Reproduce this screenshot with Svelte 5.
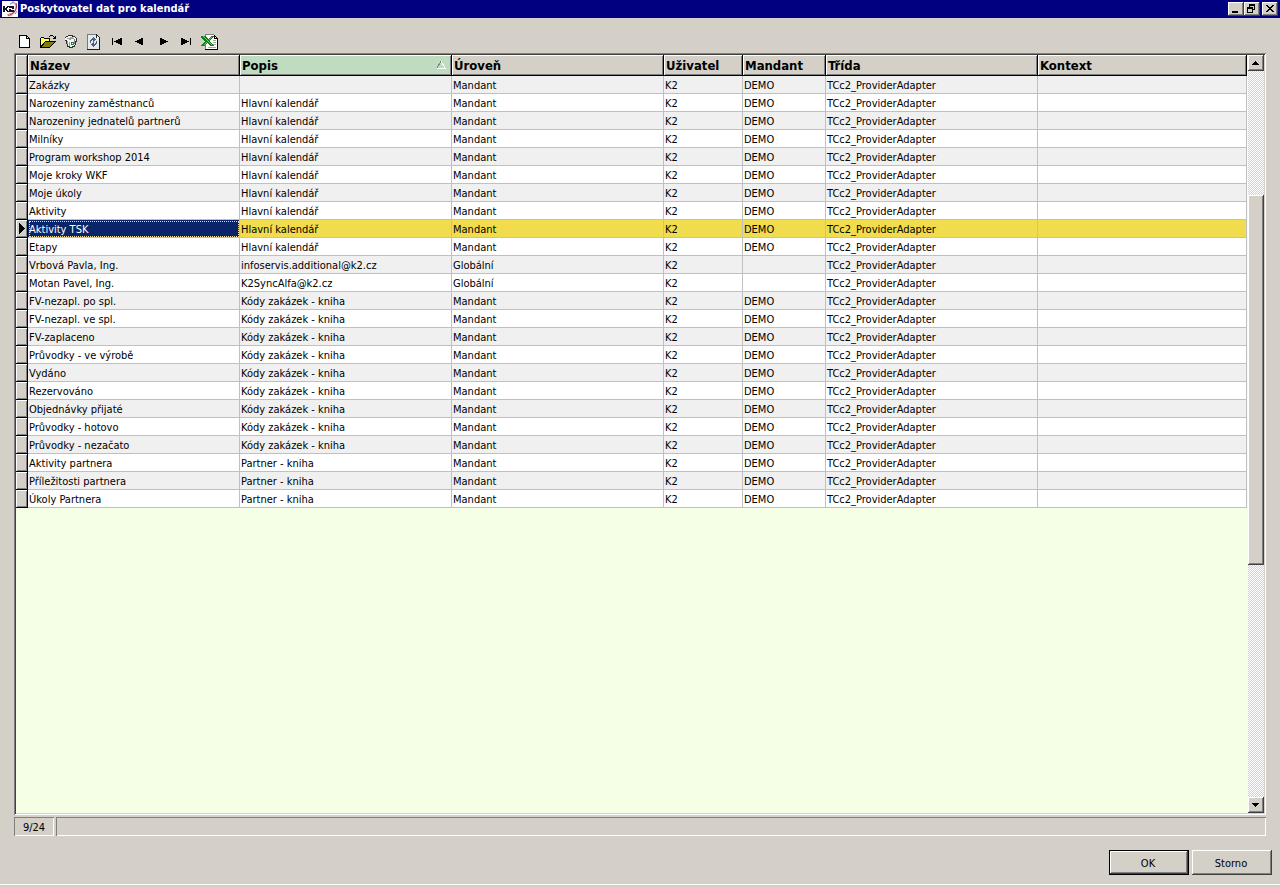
<script lang="ts">
  type Row = [string, string, string, string, string];
  const H = 'Hlavní kalendář';
  const Z = 'Kódy zakázek - kniha';
  const P = 'Partner - kniha';
  const M = 'Mandant';
  const G = 'Globální';
  const adapter = 'TCc2_ProviderAdapter';
  const rows: Row[] = [
    ['Zakázky', '', M, 'K2', 'DEMO'],
    ['Narozeniny zaměstnanců', H, M, 'K2', 'DEMO'],
    ['Narozeniny jednatelů partnerů', H, M, 'K2', 'DEMO'],
    ['Milníky', H, M, 'K2', 'DEMO'],
    ['Program workshop 2014', H, M, 'K2', 'DEMO'],
    ['Moje kroky WKF', H, M, 'K2', 'DEMO'],
    ['Moje úkoly', H, M, 'K2', 'DEMO'],
    ['Aktivity', H, M, 'K2', 'DEMO'],
    ['Aktivity TSK', H, M, 'K2', 'DEMO'],
    ['Etapy', H, M, 'K2', 'DEMO'],
    ['Vrbová Pavla, Ing.', 'infoservis.additional@k2.cz', G, 'K2', ''],
    ['Motan Pavel, Ing.', 'K2SyncAlfa@k2.cz', G, 'K2', ''],
    ['FV-nezapl. po spl.', Z, M, 'K2', 'DEMO'],
    ['FV-nezapl. ve spl.', Z, M, 'K2', 'DEMO'],
    ['FV-zaplaceno', Z, M, 'K2', 'DEMO'],
    ['Průvodky - ve výrobě', Z, M, 'K2', 'DEMO'],
    ['Vydáno', Z, M, 'K2', 'DEMO'],
    ['Rezervováno', Z, M, 'K2', 'DEMO'],
    ['Objednávky přijaté', Z, M, 'K2', 'DEMO'],
    ['Průvodky - hotovo', Z, M, 'K2', 'DEMO'],
    ['Průvodky - nezačato', Z, M, 'K2', 'DEMO'],
    ['Aktivity partnera', P, M, 'K2', 'DEMO'],
    ['Příležitosti partnera', P, M, 'K2', 'DEMO'],
    ['Úkoly Partnera', P, M, 'K2', 'DEMO'],
  ];
  let selected = $state(8);
  const go = (i: number) => (selected = Math.max(0, Math.min(rows.length - 1, i)));
</script>

<div class="window">
  <header class="titlebar">
    <svg class="logo" width="16" height="16" viewBox="0 0 16 16" aria-hidden="true">
      <rect width="16" height="16" fill="#fff" />
      <path d="M10 1Q15 2 14 7Q13 12 8 15" fill="none" stroke="#e0b0b8" stroke-width="2" />
      <path d="M14 2Q16 8 11 12L6 15" fill="none" stroke="#a03050" stroke-width="1" />
      <path d="M5 14L10 12" stroke="#e08a50" stroke-width="1" />
      <path d="M8 3L12 1M13 13L15 10" stroke="#8088c8" />
      <path d="M1 5h2v2h1v-1h1v-1h2v1h-1v1h-1v2h1v1h1v1h-2v-1h-1v-1h-1v2h-2z" fill="#101030" />
      <path d="M7 5h5v3h-3v1h3v2h-5v-3h3v-1h-3z" fill="#101030" />
    </svg>
    <h1>Poskytovatel dat pro kalendář</h1>
    <div class="winbtns">
      <button class="raised" aria-label="Minimalizovat"><svg width="12" height="10" viewBox="0 0 12 10"><path d="M2 7h6v2h-6z" /></svg></button>
      <button class="raised" aria-label="Obnovit"><svg width="12" height="10" viewBox="0 0 12 10"><path d="M3 0h6v6h-2v-1h1v-3h-4v1h-1zM1 3h6v6h-6zM2 5v3h4v-3z" fill-rule="evenodd" /></svg></button>
      <button class="raised close" aria-label="Zavřít"><svg width="12" height="10" viewBox="0 0 12 10"><path d="M2 1h2v1h1v1h2v-1h1v-1h2v1h-1v1h-1v1h-1v1h1v1h1v1h1v1h-2v-1h-1v-1h-2v1h-1v1h-2v-1h1v-1h1v-1h1v-1h-1v-1h-1v-1h-1z" /></svg></button>
    </div>
  </header>

  <div class="toolbar" role="toolbar" aria-label="Nástroje">
    <button aria-label="Nový">
      <svg viewBox="0 0 18 16"><path d="M3 1h8v1h1v1h1v1h1v10h-11z" fill="#000" /><path d="M4 2h6v3h3v8h-9z" fill="#fff" /><path d="M11 3h1v1h-1z" fill="#fff" /></svg>
    </button>
    <button aria-label="Otevřít">
      <svg viewBox="0 0 18 16">
        <path d="M1 4h1v-1h3v1h6v3h6v1h-1v1h-1v1h-1v1h-1v1h-1v1h-1v1h-10z" fill="#000" />
        <path d="M2 4h3v1h5v2h-4v1h-1v1h-1v1h-1v1h-1z" fill="#ffff60" />
        <path d="M6 8h9v1h-1v1h-1v1h-1v1h-1v1h-8v-1h1v-1h1v-2h1z" fill="#808000" />
        <path d="M10 2h1v-1h3v1h1v1h1v-1h1v3h-3v-1h1v-1h-1v-1h-3v1h-1z" fill="#000" />
      </svg>
    </button>
    <button aria-label="Smazat">
      <svg viewBox="0 0 18 16">
        <path d="M6 1h5v1h2v1h1v1h1v4h-1v3h-1v2h-2v1h-4v-1h-2v-3h-1v-3h-1v-4h1v-1h2z" fill="#303030" />
        <path d="M3 4h1v-1h2v-1h4v1h3v1h1v3h-1v4h-1v1h-2v1h-2v-1h-2v-3h-1v-3h-2z" fill="#f4f4f4" />
        <path d="M5 4h3v-1h3v1h1v1h-3v1h-2v-1h-2zM5 7h1v3h-1zM7 8h1v4h-1z" fill="#a0a0a0" />
        <path d="M12 5h1v5h-1z" fill="#808080" />
        <path d="M9 8h3v3h-3z" fill="#109030" />
        <path d="M10 9h1v1h-1z" fill="#fff" />
      </svg>
    </button>
    <button aria-label="Obnovit data">
      <svg viewBox="0 0 18 16">
        <path d="M2 0h10v1h1v1h1v1h1v13h-13z" fill="#202020" />
        <path d="M2 0h9v1h-8v14h-1z" fill="#708080" />
        <path d="M3 1h8v3h3v11h-11z" fill="#e4ecec" />
        <path d="M12 2h1v1h1v1h-2z" fill="#fff" />
        <path d="M5 6h1v-1h1v-1h1v-1h1v1h1v1h1v1h-1v1h-1v1h-1v-2h-1v1h-1v2h-1z" fill="#506088" />
        <path d="M12 7v3h-1v1h-1v1h-1v1h-1v-1h-1v-1h-1v-1h1v-1h1v-1h1v2h1v-1h1v-2z" fill="#506088" />
      </svg>
    </button>
    <button aria-label="První" onclick={() => go(0)}><svg viewBox="0 0 18 16"><path d="M4 4h1v7h-1zM14 4v7h-2v-1h-2v-1h-2v-1h-2v-1h2v-1h2v-1h2v-1z" /></svg></button>
    <button aria-label="Předchozí" onclick={() => go(selected - 1)}><svg viewBox="0 0 18 16"><path d="M12 4v7h-2v-1h-2v-1h-2v-1h-2v-1h2v-1h2v-1h2v-1z" /></svg></button>
    <button aria-label="Další" onclick={() => go(selected + 1)}><svg viewBox="0 0 18 16"><path d="M6 4v7h2v-1h2v-1h2v-1h2v-1h-2v-1h-2v-1h-2v-1z" /></svg></button>
    <button aria-label="Poslední" onclick={() => go(rows.length - 1)}><svg viewBox="0 0 18 16"><path d="M13 4h1v7h-1zM4 4v7h2v-1h2v-1h2v-1h2v-1h-2v-1h-2v-1h-2v-1z" /></svg></button>
    <button aria-label="Export do Excelu">
      <svg viewBox="0 0 18 16">
        <path d="M5 0h9v1h1v1h1v1h1v1h1v12h-13z" fill="#000" />
        <path d="M5 0h9v1h-8v14h-1z" fill="#808080" />
        <path d="M6 1h8v4h3v10h-11z" fill="#fff" />
        <path d="M15 3h1v1h-1z" fill="#fff" />
        <path d="M13 6h3v1h-3zM13 8h3v1h-3zM13 10h3v1h-3zM8 13h8v1h-8z" fill="#a0a8a0" />
        <path d="M2 2h4v1h1v1h1v1h1v-1h1v-1h1v-1h3v1h-1v1h-1v1h-1v1h-1v2h1v1h1v1h1v1h1v1h-4v-1h-1v-1h-1v-1h-1v1h-1v1h-1v1h-4v-1h1v-1h1v-1h1v-1h1v-1h-1v-1h-1v-1h-1v-1h-1v-1h-1z" fill="#108018" />
        <path d="M3 2h1v1h-1zM4 3h1v1h-1zM5 4h1v1h-1zM6 5h1v1h-1zM7 6h1v1h-1zM8 7h1v1h-1zM9 8h1v1h-1zM10 9h1v1h-1zM11 10h1v1h-1zM11 3h1v1h-1zM10 4h1v1h-1zM9 5h1v1h-1zM6 8h1v1h-1zM5 9h1v1h-1zM4 10h1v1h-1z" fill="#70c870" />
      </svg>
    </button>
  </div>

  <main class="grid">
    <div class="sheet">
      <table>
        <colgroup>
          <col class="c-ind" /><col class="c-wide" /><col class="c-wide" /><col class="c-wide" />
          <col class="c-user" /><col class="c-mand" /><col class="c-wide" /><col />
        </colgroup>
        <thead>
          <tr>
            <th aria-label="Ukazatel"></th>
            <th>Název</th>
            <th class="sorted" aria-sort="ascending">
              <div class="sort">Popis
                <svg width="9" height="8" viewBox="0 0 9 8" aria-hidden="true"><path d="M4 0L0 7" stroke="#808080" fill="none" /><path d="M4 0L8 7H0" stroke="#fff" fill="none" /></svg>
              </div>
            </th>
            <th>Úroveň</th>
            <th>Uživatel</th>
            <th>Mandant</th>
            <th>Třída</th>
            <th>Kontext</th>
          </tr>
        </thead>
        <tbody>
          {#each rows as row, i}
            <tr class:selected={i === selected} onclick={() => go(i)}>
              <td class="ind">
                {#if i === selected}<svg width="6" height="11" viewBox="0 0 6 11" aria-hidden="true"><path d="M0 0h1v1h1v1h1v1h1v1h1v1h1v1h-1v1h-1v1h-1v1h-1v1h-1v1h-1z" /></svg>{/if}
              </td>
              {#each row as cell}<td>{cell}</td>{/each}
              <td>{adapter}</td>
              <td></td>
            </tr>
          {/each}
        </tbody>
      </table>
    </div>
    <div class="scroll">
      <button class="raised" aria-label="Nahoru"><svg width="7" height="4" viewBox="0 0 7 4"><path d="M3 0h1v1h1v1h1v1h1v1h-7v-1h1v-1h1v-1h1z" /></svg></button>
      <div class="before"></div>
      <div class="thumb raised"></div>
      <div class="after"></div>
      <button class="raised" aria-label="Dolů"><svg width="7" height="4" viewBox="0 0 7 4"><path d="M0 0h7v1h-1v1h-1v1h-1v1h-1v-1h-1v-1h-1v-1h-1z" /></svg></button>
    </div>
  </main>

  <div class="status">
    <div class="pane count">{selected + 1}/{rows.length}</div>
    <div class="pane rest"></div>
  </div>

  <footer>
    <button class="action default">OK</button>
    <button class="action">Storno</button>
  </footer>
</div>

<style>
  :global(body) {
    background: #d4d0c8;
  }
  .window {
    box-sizing: border-box;
    min-height: 100vh;
    display: flex;
    flex-direction: column;
    padding-bottom: 2px;
    font: 11px/15px "DejaVu Sans Condensed", "DejaVu Sans", sans-serif;
    color: #000;
    background: #d4d0c8;
  }
  button {
    font: inherit;
    color: inherit;
    padding: 0;
    border: 0;
    margin: 0;
    background: #d4d0c8;
  }
  svg {
    display: block;
    flex: none;
    shape-rendering: crispEdges;
  }
  .raised {
    background: #d4d0c8;
    box-shadow: inset -1px -1px #404040, inset 1px 1px #fff, inset -2px -2px #808080;
  }
  .titlebar {
    display: flex;
    align-items: center;
    height: 18px;
    gap: 2px;
    padding: 0 2px;
    background: #000080;
    color: #fff;
  }
  .logo {
    shape-rendering: auto;
  }
  h1 {
    flex: 1;
    margin: 0;
    font-size: 11px;
    line-height: 18px;
    font-weight: bold;
  }
  .winbtns {
    display: flex;
  }
  .winbtns button {
    display: flex;
    width: 16px;
    height: 14px;
    padding: 2px;
    box-sizing: border-box;
  }
  .winbtns .close {
    margin-left: 2px;
  }
  .toolbar {
    display: flex;
    padding: 16px 16px 3px;
    gap: 5px;
  }
  .toolbar svg {
    width: 18px;
    height: 16px;
  }
  .grid {
    flex: 1;
    display: flex;
    margin: 0 14px;
    padding: 2px;
    background: #f5ffe6;
    box-shadow: inset 1px 1px #808080, inset -1px -1px #fff, inset 2px 2px #404040, inset -2px -2px #d4d0c8;
  }
  .sheet {
    flex: 1;
    min-width: 0;
    padding-right: 1px;
  }
  table {
    width: 100%;
    table-layout: fixed;
    border-collapse: separate;
    border-spacing: 0;
  }
  .c-ind { width: 12px; }
  .c-wide { width: 212px; }
  .c-user { width: 79px; }
  .c-mand { width: 83px; }
  th {
    height: 18px;
    padding: 2px 3px 0 2px;
    line-height: 18px;
    font-size: 13px;
    text-align: left;
    background: #d4d0c8;
    border-right: 1px solid #000;
    border-bottom: 1px solid #000;
    box-shadow: inset 1px 1px #fff, inset -1px -1px #808080;
  }
  .sorted {
    background: #c0dcc0;
  }
  .sort {
    display: flex;
    align-items: center;
    justify-content: space-between;
  }
  .sort svg {
    margin: 0 2px 2px 0;
  }
  td {
    height: 15px;
    padding: 2px 1px 0;
    white-space: nowrap;
    overflow: hidden;
    background: #fff;
    border-right: 1px solid #c0c0c0;
    border-bottom: 1px solid #c0c0c0;
  }
  tr:nth-child(odd) td {
    background: #f0f0f0;
  }
  tr .ind,
  tr:nth-child(odd) .ind {
    height: 17px;
    padding: 0 3px;
    background: #d4d0c8;
    border-color: #000;
    box-shadow: inset 1px 1px #fff, inset -1px -1px #808080;
  }
  tr.selected td:not(.ind) {
    background: #f0dc4c;
  }
  tr.selected td:nth-child(2) {
    background: #0a246a;
    color: #fff;
    outline: 1px dotted #f0dc9c;
    outline-offset: -2px;
  }
  .scroll {
    width: 16px;
    display: flex;
    flex-direction: column;
    background: repeating-conic-gradient(#fff 0 25%, #d4d0c8 0 50%) 0 0 / 2px 2px;
  }
  .scroll button {
    display: flex;
    align-items: center;
    justify-content: center;
    height: 16px;
    padding-right: 2px;
  }
  .before { flex: 124; }
  .thumb { flex: 370; }
  .after { flex: 232; }
  .status {
    display: flex;
    gap: 2px;
    margin: 2px 14px 0;
  }
  .pane {
    height: 19px;
    line-height: 21px;
    box-shadow: inset 1px 1px #808080, inset -1px -1px #fff;
  }
  .count {
    width: 40px;
    text-align: center;
  }
  .rest {
    flex: 1;
  }
  footer {
    display: flex;
    justify-content: flex-end;
    gap: 3px;
    padding: 14px 8px 9px;
    border-bottom: 1px solid #fff;
  }
  .action {
    width: 80px;
    height: 25px;
    padding: 2px 2px 0 0;
    box-shadow: inset -1px -1px #404040, inset 1px 1px #fff, inset -2px -2px #808080;
  }
  .default {
    box-shadow: inset 0 0 0 1px #000, inset -2px -2px #404040, inset 2px 2px #fff, inset -3px -3px #808080;
  }
</style>
